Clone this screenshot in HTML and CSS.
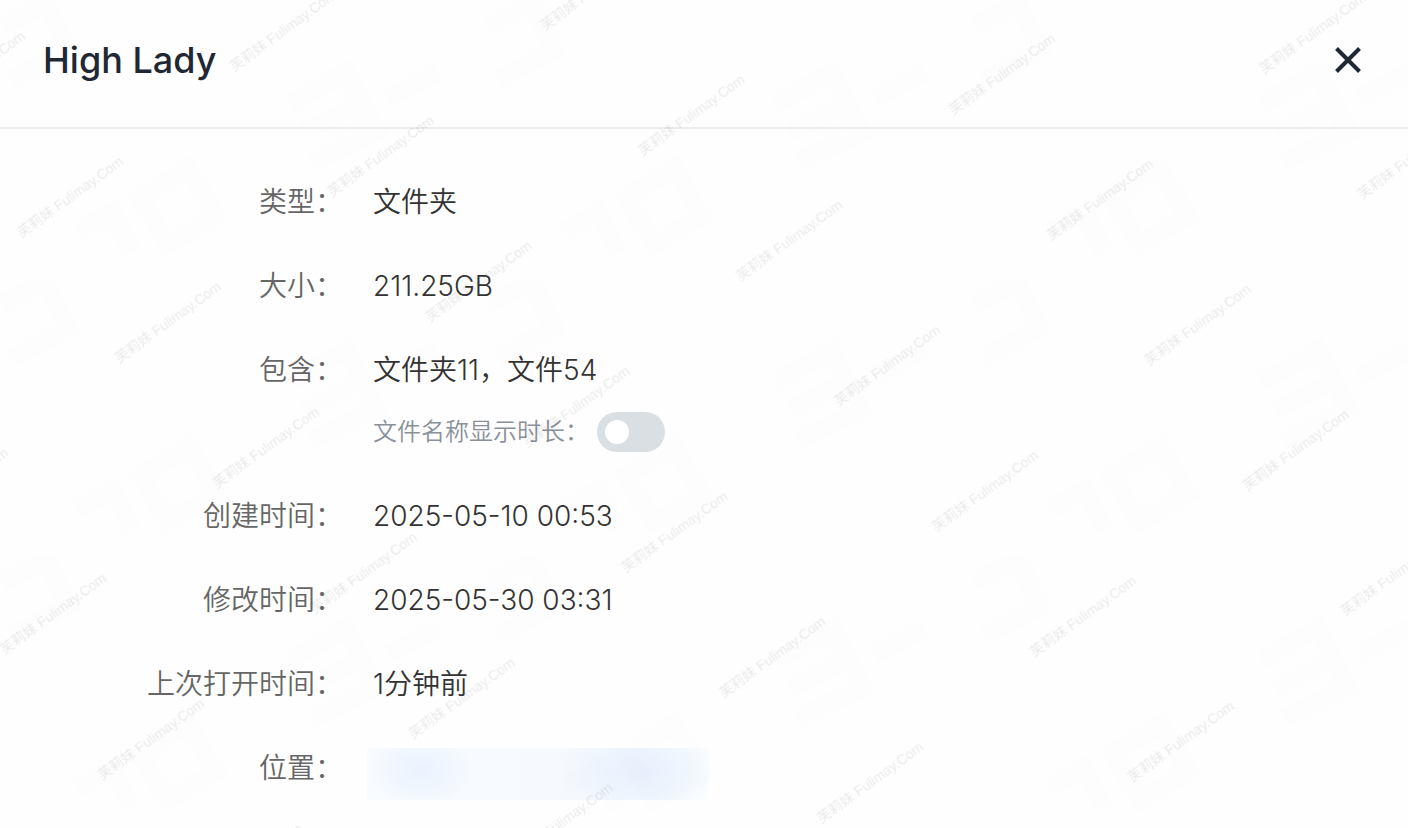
FILE: index.html
```
<!DOCTYPE html>
<html lang="zh-CN">

<head>
    <meta charset="UTF-8">
    <meta name="viewport" content="width=device-width, initial-scale=1.0">
    <title>High Lady</title>

    <link rel="stylesheet" href="styles.css">
</head>

<body>
    <main class="dialog">
        <header class="dialog_header">
            <h1 class="dialog_title">High Lady</h1>
            <button type="button" class="close_btn" aria-label="关闭">
                <svg width="28" height="28" viewBox="0 0 28 28" aria-hidden="true">
                    <path d="M2.5 2.5 L25.5 25.5 M25.5 2.5 L2.5 25.5" fill="none" stroke="currentColor" stroke-width="4" />
                </svg>
            </button>
        </header>

        <dl class="info_list">
            <div class="info_row">
                <dt>类型：</dt>
                <dd>文件夹</dd>
            </div>
            <div class="info_row">
                <dt>大小：</dt>
                <dd>211.25GB</dd>
            </div>
            <div class="info_row">
                <dt>包含：</dt>
                <dd>
                    文件夹11，文件54
                    <div class="duration_box">
                        <label for="duration">文件名称显示时长：</label>
                        <input type="checkbox" role="switch" class="switch" id="duration" name="duration">
                    </div>
                </dd>
            </div>
            <div class="info_row">
                <dt>创建时间：</dt>
                <dd>2025-05-10 00:53</dd>
            </div>
            <div class="info_row">
                <dt>修改时间：</dt>
                <dd>2025-05-30 03:31</dd>
            </div>
            <div class="info_row">
                <dt>上次打开时间：</dt>
                <dd>1分钟前</dd>
            </div>
            <div class="info_row">
                <dt>位置：</dt>
                <dd class="hidden_path"></dd>
            </div>
        </dl>
    </main>

    <!-- watermark -->
    <svg class="watermark" aria-hidden="true">
        <defs>
            <pattern id="mark" width="270" height="159" patternUnits="userSpaceOnUse"
                patternTransform="translate(22 239) rotate(-38) translate(-20 -60)">
                <text x="20" y="59" class="mark_text" transform="rotate(2 20 59)">芙莉妹 Fulimay.Com</text>
            </pattern>
            <pattern id="shapes" width="486" height="278" patternUnits="userSpaceOnUse">
                <g class="mark_shapes">
                    <path d="M140 198 L188 168 L216 216 L168 244 Z" />
                    <path d="M78 232 L112 212 L132 252" />
                    <path d="M290 104 L346 72 L376 132 L312 162 M304 132 L352 108" />
                    <path d="M388 98 L438 72" />
                    <path d="M2 26 L46 4 L68 50 L12 80" />
                </g>
            </pattern>
        </defs>
        <rect width="100%" height="100%" fill="url(#shapes)" />
        <rect width="100%" height="100%" fill="url(#mark)" />
    </svg>
</body>

</html>
```

FILE: styles.css
```
* {
    box-sizing: border-box;
}

body {
    margin: 0;
    background-color: #fefefe;
    color: #333333;
    font-family: Inter, "Noto Sans CJK SC", sans-serif;
    overflow: hidden;
}

.dialog_header {
    display: flex;
    justify-content: space-between;
    align-items: center;
    padding: 36px 46px 43px 43px;
    border-bottom: 2px solid #ececec;
}

.dialog_title {
    margin: 0;
    font-size: 36px;
    font-weight: 500;
    line-height: 48px;
    color: #1f2833;
}

.close_btn {
    display: flex;
    padding: 0;
    border: none;
    background-color: transparent;
    color: #1f2833;
    cursor: pointer;
}

.info_list {
    display: flex;
    flex-direction: column;
    gap: 44px;
    margin: 0;
    padding-top: 53px;
    font-size: 28px;
    font-weight: 350;
    line-height: 40px;
}

.info_row {
    display: flex;
    gap: 24px;
}

.info_row dt {
    flex: none;
    width: 343px;
    text-align: right;
    color: #666666;
}

.info_row dd {
    margin: 0;
    padding-left: 6px;
}

.duration_box {
    display: flex;
    align-items: center;
    gap: 8px;
    margin-top: 22px;
    font-size: 24px;
    color: #8a9099;
}

.switch {
    appearance: none;
    display: flex;
    align-items: center;
    width: 68px;
    height: 40px;
    margin: 0;
    padding: 0 8px;
    border-radius: 20px;
    background-color: #dadfe3;
    cursor: pointer;
}

.switch::before {
    content: "";
    width: 24px;
    height: 24px;
    border-radius: 50%;
    background-color: #ffffff;
}

.switch:checked {
    justify-content: flex-end;
    background-color: #2e6bf6;
}

.info_row .hidden_path {
    width: 342px;
    height: 52px;
    background: radial-gradient(ellipse 56px 40px at 52px 22px, #e9f2fe, transparent),
        radial-gradient(ellipse 80px 44px at 274px 22px, #e7f0fd, transparent),
        linear-gradient(to right, #f9fcff, #f6f9fd 50%, #f3f8fe 85%, #fcfeff);
}

.watermark {
    position: fixed;
    inset: 0;
    width: 100%;
    height: 100%;
    pointer-events: none;
}

.mark_text {
    font-family: "Liberation Sans", "Noto Sans CJK SC", sans-serif;
    font-size: 14px;
    fill: rgba(0, 0, 0, 0.08);
}

.mark_shapes {
    fill: none;
    stroke: rgba(0, 0, 0, 0.004);
    stroke-width: 18px;
}
```
